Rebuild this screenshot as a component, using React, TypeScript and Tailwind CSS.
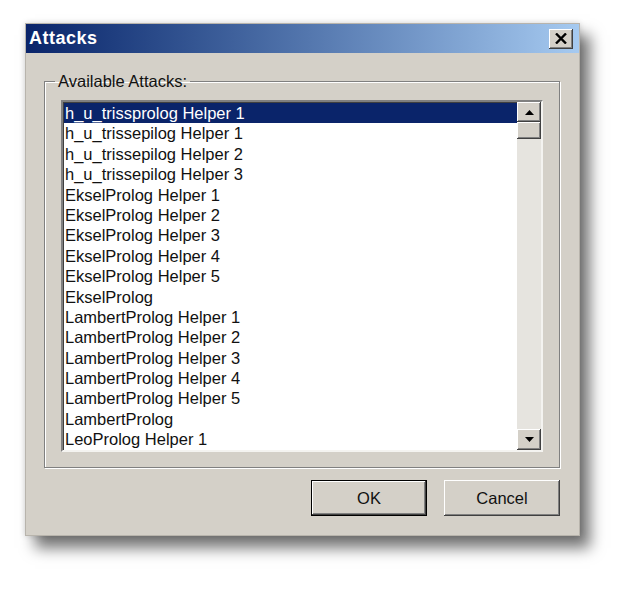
const items = [
  'h_u_trissprolog Helper 1',
  'h_u_trissepilog Helper 1',
  'h_u_trissepilog Helper 2',
  'h_u_trissepilog Helper 3',
  'EkselProlog Helper 1',
  'EkselProlog Helper 2',
  'EkselProlog Helper 3',
  'EkselProlog Helper 4',
  'EkselProlog Helper 5',
  'EkselProlog',
  'LambertProlog Helper 1',
  'LambertProlog Helper 2',
  'LambertProlog Helper 3',
  'LambertProlog Helper 4',
  'LambertProlog Helper 5',
  'LambertProlog',
  'LeoProlog Helper 1',
];

const raised =
  'bg-[#d4d0c8] shadow-[inset_-1px_-1px_0_#404040,inset_1px_1px_0_#ffffff,inset_-2px_-2px_0_#808080]';

function Arrow({ down }: { down?: boolean }) {
  return (
    <svg width="9" height="5" viewBox="0 0 9 5">
      <polygon points={down ? '0,0 9,0 4.5,5' : '0,5 9,5 4.5,0'} fill="#000" />
    </svg>
  );
}

export default function App() {
  return (
    <div className="w-[635px] h-[589px] bg-white pt-[23px] pl-[25px] font-['Liberation_Sans',Arial,sans-serif] text-[#111]">
      <div className="w-[555px] h-[513px] flex flex-col bg-[#d4d0c8] border border-[#b8b4ac] shadow-[10px_12px_14px_rgba(0,0,0,0.55),0_0_6px_rgba(0,0,0,0.15)]">
        {/* Title bar */}
        <div className="h-[29px] flex items-center justify-between pl-[3px] pr-[6px] bg-gradient-to-r from-[#0a246a] to-[#a6caf0]">
          <span className="text-white font-bold text-[18px] tracking-[0.5px]">Attacks</span>
          <button className={`w-[24px] h-[20px] flex items-center justify-center ${raised}`}>
            <svg width="12" height="11" viewBox="0 0 12 11">
              <path d="M1 0.5 L11 10.5 M11 0.5 L1 10.5" stroke="#000" strokeWidth="2.4" />
            </svg>
          </button>
        </div>

        {/* Body */}
        <div className="flex-1 flex flex-col px-[18px] pt-[19px] pr-[19px]">
          <fieldset className="h-[396px] border border-[#808080] shadow-[1px_1px_0_#ffffff,inset_1px_1px_0_#ffffff] px-[16px] pt-[10px] pb-[16px]">
            <legend className="-ml-[6px] px-[3px] text-[16.5px] leading-[18px]">Available Attacks:</legend>
            <div className="h-full flex bg-white border-2 border-t-[#808080] border-l-[#808080] border-b-[#f4f3f0] border-r-[#f4f3f0] shadow-[inset_1px_1px_0_#404040]">
              <ul className="flex-1 pt-[1px] pl-[1px]">
                {items.map((it, i) => (
                  <li
                    key={it}
                    className={`h-[20.4px] pl-[1px] text-[16.5px] leading-[20px] whitespace-nowrap ${
                      i === 0 ? 'bg-[#0a246a] text-white' : ''
                    }`}
                  >
                    {it}
                  </li>
                ))}
              </ul>
              {/* Scrollbar */}
              <div className="w-[24px] flex flex-col bg-[#e6e4df]">
                <div className={`h-[20px] flex items-center justify-center ${raised}`}>
                  <Arrow />
                </div>
                <div className={`h-[17px] ${raised}`} />
                <div className="flex-1" />
                <div className={`h-[21px] flex items-center justify-center ${raised}`}>
                  <Arrow down />
                </div>
              </div>
            </div>
          </fieldset>

          {/* Buttons */}
          <div className="flex justify-end gap-[17px] mt-[12px]">
            <button className="w-[116px] h-[36px] border border-black text-[16.5px]">
              <div className={`h-full flex items-center justify-center ${raised}`}>OK</div>
            </button>
            <button className={`w-[116px] h-[36px] text-[16.5px] ${raised}`}>Cancel</button>
          </div>
        </div>
      </div>
    </div>
  );
}
